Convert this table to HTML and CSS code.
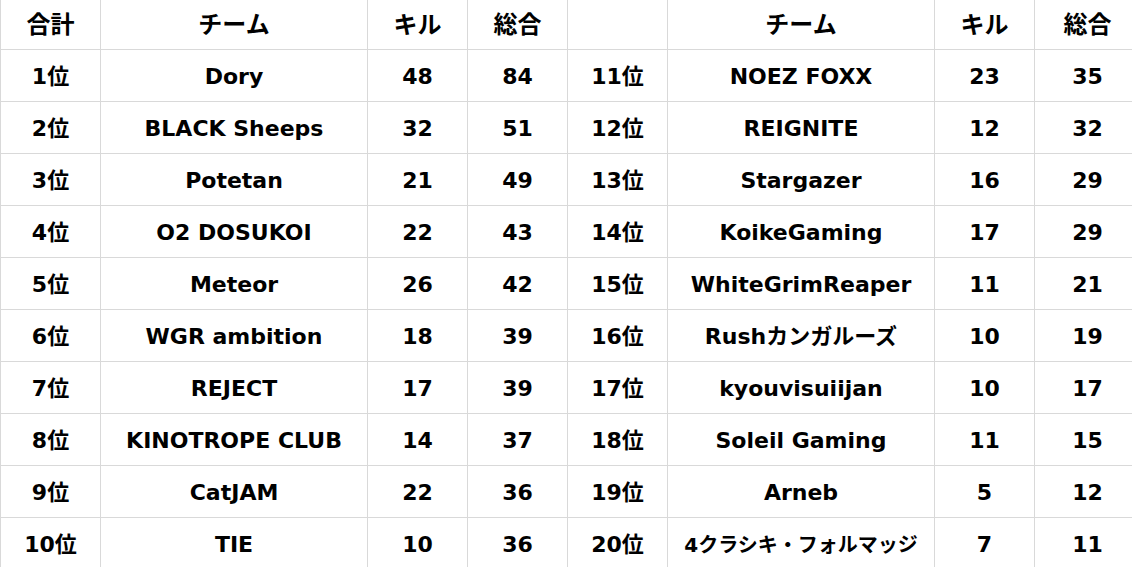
FILE: index.html
```html
<!DOCTYPE html>
<html lang="ja">
<head>
<meta charset="utf-8">
<link rel="stylesheet" href="styles.css">
</head>
<body>
<table class="ranking">
  <colgroup>
    <col class="c-rank"><col class="c-team"><col class="c-num"><col class="c-num">
    <col class="c-rank"><col class="c-team"><col class="c-num"><col class="c-last">
  </colgroup>
  <thead>
    <tr><th>合計</th><th>チーム</th><th>キル</th><th>総合</th><th></th><th>チーム</th><th>キル</th><th>総合</th></tr>
  </thead>
  <tbody>
    <tr><td>1位</td><td>Dory</td><td>48</td><td>84</td><td>11位</td><td>NOEZ FOXX</td><td>23</td><td>35</td></tr>
    <tr><td>2位</td><td>BLACK Sheeps</td><td>32</td><td>51</td><td>12位</td><td>REIGNITE</td><td>12</td><td>32</td></tr>
    <tr><td>3位</td><td>Potetan</td><td>21</td><td>49</td><td>13位</td><td>Stargazer</td><td>16</td><td>29</td></tr>
    <tr><td>4位</td><td>O2 DOSUKOI</td><td>22</td><td>43</td><td>14位</td><td>KoikeGaming</td><td>17</td><td>29</td></tr>
    <tr><td>5位</td><td>Meteor</td><td>26</td><td>42</td><td>15位</td><td>WhiteGrimReaper</td><td>11</td><td>21</td></tr>
    <tr><td>6位</td><td>WGR ambition</td><td>18</td><td>39</td><td>16位</td><td>Rushカンガルーズ</td><td>10</td><td>19</td></tr>
    <tr><td>7位</td><td>REJECT</td><td>17</td><td>39</td><td>17位</td><td>kyouvisuiijan</td><td>10</td><td>17</td></tr>
    <tr><td>8位</td><td>KINOTROPE CLUB</td><td>14</td><td>37</td><td>18位</td><td>Soleil Gaming</td><td>11</td><td>15</td></tr>
    <tr><td>9位</td><td>CatJAM</td><td>22</td><td>36</td><td>19位</td><td>Arneb</td><td>5</td><td>12</td></tr>
    <tr><td>10位</td><td>TIE</td><td>10</td><td>36</td><td>20位</td><td class="tight">4クラシキ・フォルマッジ</td><td>7</td><td>11</td></tr>
  </tbody>
</table>
</body>
</html>
```

FILE: styles.css
```css
html, body {
  margin: 0;
  padding: 0;
  background: #ffffff;
  overflow: hidden;
}

.ranking {
  border-collapse: collapse;
  table-layout: fixed;
  width: 1140px;
  font-family: "DejaVu Sans", "Noto Sans CJK JP", sans-serif;
  font-weight: 700;
  font-size: 22px;
  color: #000;
}

.c-rank { width: 100px; }
.c-team { width: 267px; }
.c-num { width: 100px; }
.c-last { width: 106px; }

.ranking th,
.ranking td {
  border: 1px solid #d9d9d9;
  text-align: center;
  vertical-align: middle;
  padding: 0;
  line-height: 26px;
  white-space: nowrap;
  overflow: hidden;
}

.ranking thead th {
  border-top: none;
  height: 46px;
  padding-bottom: 3px;
  font-weight: 700;
  font-size: 24px;
  font-family: "Noto Sans CJK JP", sans-serif;
}

.ranking tbody td {
  height: 49px;
  padding-top: 2px;
}

.ranking .tight {
  font-size: 20px;
}
```
